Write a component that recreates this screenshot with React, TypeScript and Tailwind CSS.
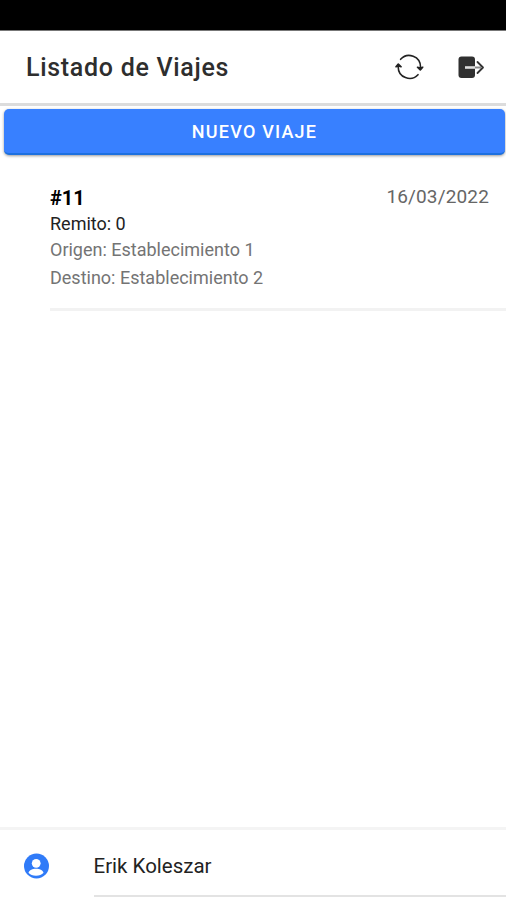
import React from 'react';

const trips = [
  {
    id: 11,
    remito: 0,
    origin: 'Establecimiento 1',
    destination: 'Establecimiento 2',
    date: '16/03/2022'
  }
];

const SyncIcon: React.FC = () => (
  <svg width="30" height="30" viewBox="0 0 30 30" fill="none" stroke="#222" strokeWidth="1.6" strokeLinecap="round" strokeLinejoin="round">
    <path d="M6.600 7.300A11.400 11.400 0 0 1 26.500 15v2" />
    <path d="M24 22.700A11.400 11.400 0 0 1 4.200 15v-2" />
    <path d="M2 14.800l2.300-2.800 2.800 2.800-2.600-.8zM23.500 15.200l2.800 2.800 2.400-2.800-2.300.8z" fill="#222" />
  </svg>
);

const ExitIcon: React.FC = () => (
  <svg width="28" height="24" viewBox="0 0 28 24" fill="none">
    <rect x="1.500" y="1.500" width="16.500" height="21.500" rx="3" fill="#303030" />
    <path d="M8 12.500h10" stroke="#dedede" strokeWidth="2.600" />
    <path d="M18 12.500h6" stroke="#888" strokeWidth="2" />
    <path d="M20.500 7l5.500 5.500-5.500 5.500" stroke="#333" strokeWidth="1.800" strokeLinecap="round" strokeLinejoin="round" />
  </svg>
);

const UserIcon: React.FC = () => (
  <svg width="26" height="26" viewBox="0 0 26 26">
    <circle cx="12.500" cy="13" r="12.500" fill="#307bf8" />
    <circle cx="12.200" cy="10.300" r="4.400" fill="#fff" />
    <path d="M4.500 19.700c.8-2.900 4-4 7.500-4s6.700 1.100 7.500 4c-1.600 2-4.300 3-7.500 3s-5.900-1-7.500-3z" fill="#fff" />
  </svg>
);

export default function App() {
  return (
    <div className="flex h-[900px] w-[506px] flex-col overflow-hidden bg-white font-['Roboto',sans-serif]">
      <div className="h-[30px] shrink-0 bg-black"></div>
      <header className="flex h-[76px] shrink-0 items-center border-t border-t-[#777] border-b-3 border-b-[#dcdcdc] pr-[21px] pl-[26px]">
        <h1 className="flex-1 pt-0.5 text-[25px] leading-8 font-medium tracking-[0.7px] text-[#2e2e2e]">Listado de Viajes</h1>
        <button className="mr-[33px]" aria-label="Actualizar">
          <SyncIcon />
        </button>
        <button aria-label="Salir">
          <ExitIcon />
        </button>
      </header>

      <main className="flex-1">
        <div className="pt-[3px] pr-px pl-1">
          <button className="h-[46px] w-full rounded-[5px] border-b-2 border-[#1d70df] bg-[#3880ff] text-[18px] font-medium tracking-[1.2px] text-white shadow-[0_1px_3px_rgba(0,0,0,0.4)]">
            NUEVO VIAJE
          </button>
        </div>
        {trips.map((trip) => (
          <div key={trip.id} className="mt-[29px] ml-[50px] flex h-[127px] justify-between border-b-3 border-[#f2f2f2] pr-[17px]">
            <div className="text-[18px]">
              <h2 className="text-[20px] leading-7 font-bold text-black">#{trip.id}</h2>
              <h3 className="leading-6 text-[#222]">Remito: {trip.remito}</h3>
              <p className="leading-[28px] text-[#747474]">Origen: {trip.origin}</p>
              <p className="leading-[28px] text-[#747474]">Destino: {trip.destination}</p>
            </div>
            <span className="text-[19px] leading-[26px] tracking-[0.15px] text-[#666]">{trip.date}</span>
          </div>
        ))}
      </main>

      <footer className="flex h-[73px] shrink-0 border-t-3 border-[#f4f4f4] pl-6">
        <div className="mt-[23px] w-[69.500px]">
          <UserIcon />
        </div>
        <div className="h-[67px] flex-1 border-b-2 border-[#e3e3e3] text-[20.500px] leading-[72px] text-[#222]">Erik Koleszar</div>
      </footer>
    </div>
  );
}
